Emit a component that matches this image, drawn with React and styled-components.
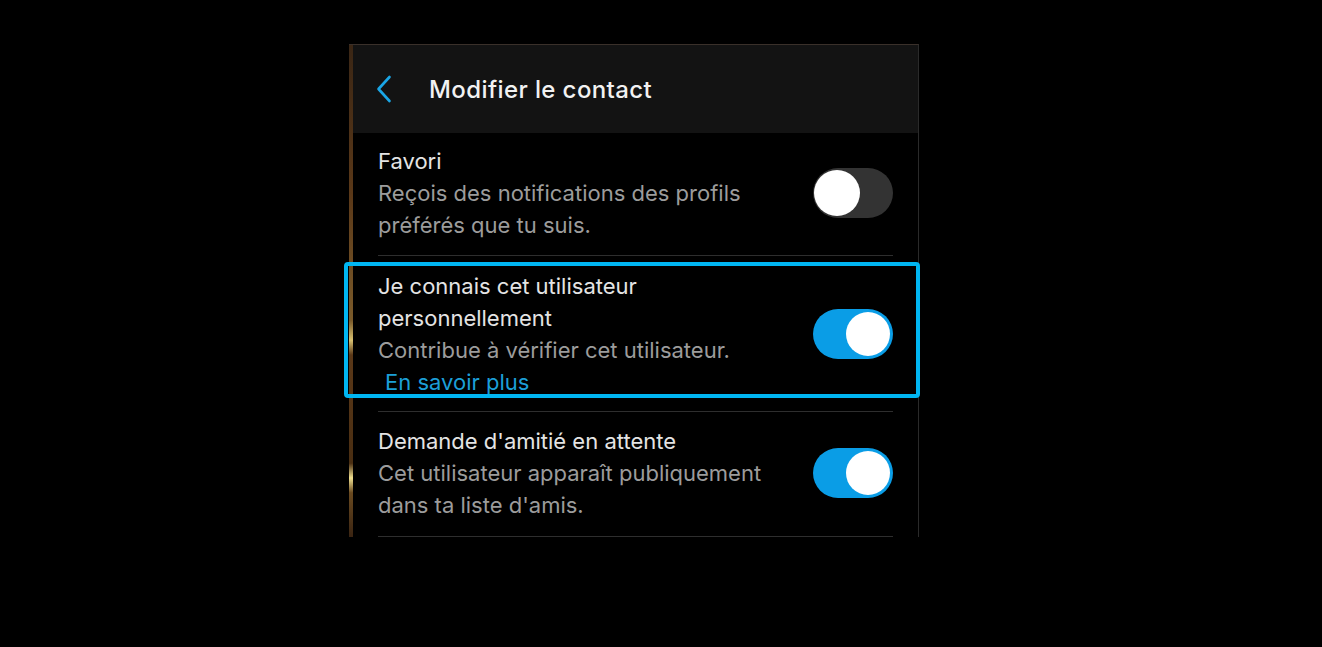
import React from "react";
import styled, { createGlobalStyle } from "styled-components";

const GlobalStyle = createGlobalStyle`
  html, body {
    margin: 0;
    background: #000;
  }
  body {
    font-family: Inter, "Noto Sans", sans-serif;
    -webkit-font-smoothing: antialiased;
  }
`;

const Page = styled.div`
  width: 1322px;
  height: 647px;
  background: #000;
  padding: 44px 0 0 349px;
  box-sizing: border-box;
`;

const Screen = styled.div`
  width: 570px;
  display: flex;
  flex-direction: column;
  background: #000;
  border-top: 1px solid #3a302a;
  border-right: 1px solid #2a2a2a;
  box-sizing: border-box;
  position: relative;
  padding-left: 4px;

  &::before {
    content: "";
    position: absolute;
    left: 0;
    top: 0;
    bottom: 0;
    width: 4px;
    background: linear-gradient(
      to bottom,
      #3a2615 0%,
      #5a3818 30%,
      #7a5a2a 56%,
      #d8c070 60%,
      #5a3818 63%,
      #4a2e12 85%,
      #f0e090 88%,
      #6a4a20 91%,
      #3a2412 100%
    );
  }
`;

const Header = styled.header`
  height: 88px;
  background: #131313;
  display: flex;
  align-items: center;
  padding-left: 22px;
  gap: 36px;
`;

const BackButton = styled.button`
  background: none;
  border: 0;
  padding: 0;
  width: 18px;
  height: 28px;
  display: flex;
  align-items: center;
  justify-content: center;
  cursor: pointer;
`;

const Title = styled.h1`
  margin: 0;
  font-size: 24px;
  font-weight: 500;
  letter-spacing: 0.4px;
  color: #f2f2f2;
`;

const List = styled.div`
  display: flex;
  flex-direction: column;
  padding: 0 25px;
`;

const Row = styled.div`
  position: relative;
  display: flex;
  align-items: center;
  justify-content: space-between;
  padding: ${(p) => (p.$first ? "12px 0 14px" : p.$highlight ? "14px 0 13px" : "13px 0 15px")};
  border-bottom: 1px solid #2e2e2e;

  ${(p) =>
    p.$highlight &&
    `
    &::after {
      content: "";
      position: absolute;
      left: -34px;
      right: -27px;
      top: 6px;
      bottom: 13px;
      border: 4px solid #00b6f2;
      border-radius: 4px;
      pointer-events: none;
    }
  `}
`;

const Text = styled.div`
  display: flex;
  flex-direction: column;
  max-width: 420px;
  font-size: 22px;
  line-height: 32px;
  white-space: nowrap;
`;

const RowTitle = styled.div`
  color: #e4e4e4;
`;

const RowDesc = styled.div`
  color: #9c9c9c;
`;

const Link = styled.a`
  color: #1c9fd8;
  text-decoration: none;
  padding-left: 7px;
  cursor: pointer;
`;

const Track = styled.button`
  flex: none;
  width: 80px;
  height: 50px;
  border: 0;
  padding: 0 3px;
  border-radius: 25px;
  background: ${(p) => (p.$on ? "#0a9de6" : "#333333")};
  display: flex;
  align-items: center;
  justify-content: ${(p) => (p.$on ? "flex-end" : "flex-start")};
  cursor: pointer;
`;

const Knob = styled.span`
  width: ${(p) => (p.$on ? "44px" : "46px")};
  height: ${(p) => (p.$on ? "44px" : "46px")};
  border-radius: 50%;
  background: #ffffff;
  margin-left: ${(p) => (p.$on ? "0" : "-2px")};
`;

function Toggle({ on }) {
  return (
    <Track $on={on} aria-pressed={on}>
      <Knob $on={on} />
    </Track>
  );
}

const settings = [
  {
    title: ["Favori"],
    desc: ["Reçois des notifications des profils", "préférés que tu suis."],
    on: false,
  },
  {
    title: ["Je connais cet utilisateur", "personnellement"],
    desc: ["Contribue à vérifier cet utilisateur."],
    link: "En savoir plus",
    on: true,
    highlight: true,
  },
  {
    title: ["Demande d'amitié en attente"],
    desc: ["Cet utilisateur apparaît publiquement", "dans ta liste d'amis."],
    on: true,
  },
];

export default function App() {
  return (
    <>
      <GlobalStyle />
      <Page>
        <Screen>
          <Header>
            <BackButton aria-label="Retour">
              <svg width="16" height="28" viewBox="0 0 16 28" fill="none">
                <path
                  d="M13.5 2 L2.5 14 L13.5 26"
                  stroke="#1aa6e6"
                  strokeWidth="2.6"
                  strokeLinecap="round"
                  strokeLinejoin="round"
                />
              </svg>
            </BackButton>
            <Title>Modifier le contact</Title>
          </Header>
          <List>
            {settings.map((s, i) => (
              <Row key={i} $first={i === 0} $highlight={s.highlight}>
                <Text>
                  {s.title.map((t) => (
                    <RowTitle key={t}>{t}</RowTitle>
                  ))}
                  {s.desc.map((d) => (
                    <RowDesc key={d}>{d}</RowDesc>
                  ))}
                  {s.link && <Link>{s.link}</Link>}
                </Text>
                <Toggle on={s.on} />
              </Row>
            ))}
          </List>
        </Screen>
      </Page>
    </>
  );
}
